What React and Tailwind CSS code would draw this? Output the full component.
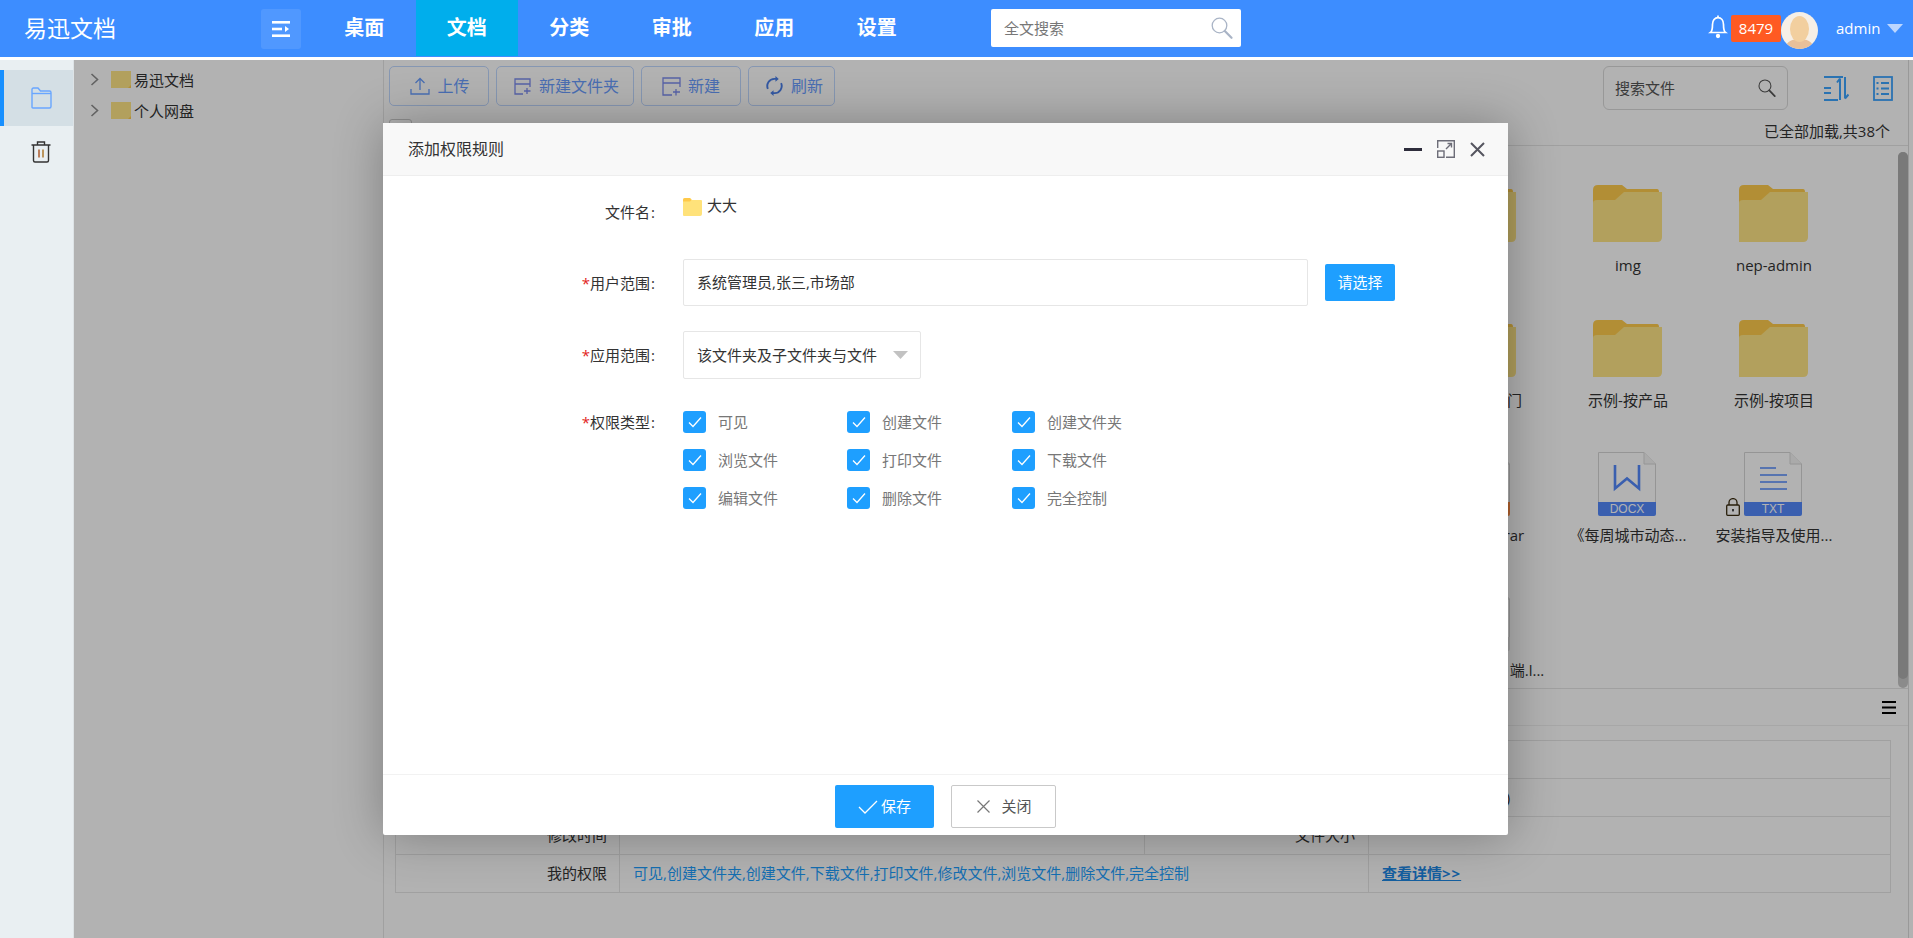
import React from "react";

const NAV = ["桌面", "文档", "分类", "审批", "应用", "设置"];

function Folder() {
  return (
    <svg width="69" height="57" viewBox="0 0 69 57">
      <path d="M0 5Q0 0 5 0H29L34 4H64Q66 4 66 7V20H0Z" fill="#ffcc4c" />
      <path d="M0 18Q0 15 4 15H22L31 7H69V52Q69 57 64 57H0Z" fill="#ffe586" />
    </svg>
  );
}

function FileIcon({ label, band, children, lock }) {
  return (
    <div className="relative flex h-[64px] w-[58px] flex-col">
      <svg width="58" height="50" viewBox="0 0 58 50" className="block">
        <path d="M.5 50V.5H46L57.5 12V50" fill="#fff" stroke="#d6d6d6" />
        <path d="M46 .5V12H57.5" fill="#f4f4f4" stroke="#d6d6d6" />
        {children}
      </svg>
      <div className="flex h-[14px] items-center justify-center rounded-b-[2px] font-['Liberation_Sans',sans-serif] text-[12px] leading-[14px] text-[#fff]" style={{ background: band }}>
        {label}
      </div>
      {lock && (
        <svg width="14" height="18" viewBox="0 0 14 18" className="absolute bottom-0 left-[-18px]">
          <rect x=".7" y="7" width="12.6" height="10.3" rx="1" fill="#fff" stroke="#3a2c10" strokeWidth="1.3" />
          <path d="M3 7V4.6a4 4 0 0 1 8 0V7" fill="none" stroke="#3a2c10" strokeWidth="1.3" />
          <rect x="6.2" y="11" width="1.6" height="2.4" fill="#222" />
        </svg>
      )}
    </div>
  );
}

function Cell({ children, label }) {
  return (
    <div className="flex h-[135px] w-[146px] flex-col items-center pt-[30px]">
      <div className="flex h-[70px] items-end">{children}</div>
      <div className="mt-[7px] h-[24px] whitespace-nowrap text-[15px] leading-[24px] text-[#333]">{label}</div>
    </div>
  );
}

function Search({ color = "#a9b4c6", size = 22 }) {
  return (
    <svg width={size} height={size} viewBox="0 0 22 22" fill="none">
      <circle cx="8.5" cy="8.5" r="7.3" stroke={color} strokeWidth="1.3" />
      <path d="M13.8 14 20.5 20.8" stroke={color} strokeWidth="2.2" strokeLinecap="round" />
    </svg>
  );
}

function ToolBtn({ w, icon, label, extra = "" }) {
  return (
    <div className={`flex h-[40px] items-center justify-center rounded-[5px] border border-[#c0d8ff] text-[16px] text-[#6a9eff] ${w} ${extra}`}>
      {icon}
      <span>{label}</span>
    </div>
  );
}

function Check({ label }) {
  return (
    <div className="flex h-[22px] items-center gap-[12px]">
      <div className="flex h-[22px] w-[23px] items-center justify-center rounded-[3px] bg-[#1e9fff]">
        <svg width="14" height="12" viewBox="0 0 14 12" fill="none">
          <path d="M1 6.5 5 10.5 13 1.5" stroke="#fff" strokeWidth="1.3" />
        </svg>
      </div>
      <span className="text-[15px] leading-[22px] text-[#777]">{label}</span>
    </div>
  );
}

function Label({ children, req }) {
  return (
    <div className="w-[272px] shrink-0 text-right text-[15px] leading-[22px] text-[#333]">
      {req && <span className="text-[#e2231a]">*</span>}
      {children}
      <span className="ml-[1px]">:</span>
    </div>
  );
}

function TreeRow({ label }) {
  return (
    <div className="flex h-[31px] items-center">
      <svg width="9" height="13" viewBox="0 0 9 13" fill="none" className="ml-[16px]">
        <path d="M1.5 1 7.5 6.5 1.5 12" stroke="#8d8d8d" strokeWidth="1.6" />
      </svg>
      <svg width="20" height="17" viewBox="0 0 20 17" className="ml-[12px]">
        <rect width="20" height="17" fill="#ffe586" />
        <path d="M17 17 20 14V17Z" fill="#ffcc4c" />
      </svg>
      <span className="ml-[3px] text-[15px] leading-[20px] text-[#333]">{label}</span>
    </div>
  );
}

const BLUE_ROW = "可见,创建文件夹,创建文件,下载文件,打印文件,修改文件,浏览文件,删除文件,完全控制";

export default function App() {
  return (
    <div className="relative h-[938px] w-[1913px] overflow-hidden bg-white font-['Open_Sans','Noto_Sans_CJK_SC',sans-serif]">
      {/* header */}
      <header className="flex h-[60px] items-start border-b-[3px] border-white bg-[#3d8dff]">
        <div className="flex h-[57px] w-[261px] items-center pl-[24px] text-[23px] text-white">易迅文档</div>
        <div className="mt-[9px] flex h-[40px] w-[40px] items-center justify-center rounded-[3px] bg-white/10">
          <svg width="18" height="16" viewBox="0 0 18 16" fill="#fff">
            <rect width="18" height="2.6" />
            <rect y="6.7" width="10" height="2.6" />
            <rect y="13.4" width="18" height="2.6" />
            <path d="M13 5 17 8 13 11Z" />
          </svg>
        </div>
        <nav className="ml-[12px] flex">
          {NAV.map((n) => (
            <div key={n} className={`flex h-[56px] w-[102.5px] items-center justify-center text-[20px] font-bold text-white ${n === "文档" ? "bg-[#00aeec]" : ""}`}>
              {n}
            </div>
          ))}
        </nav>
        <div className="ml-[63px] mt-[9px] flex h-[38px] w-[250px] items-center justify-between rounded-[2px] bg-white pl-[13px] pr-[8px] text-[15px] text-[#777]">
          <span>全文搜索</span>
          <Search />
        </div>
        <div className="ml-[467px] mt-[15px]">
          <svg width="20" height="24" viewBox="0 0 20 24" fill="none" stroke="#fff" strokeWidth="1.7">
            <path d="M2.5 17.5C4.5 16 4.5 13 4.5 9.5C4.5 5.5 6.8 2.6 10 2.6S15.5 5.5 15.5 9.5C15.5 13 15.5 16 17.5 17.5Z" />
            <path d="M10 .6V2.6" />
            <circle cx="10" cy="21" r="1.3" fill="#fff" />
          </svg>
        </div>
        <div className="ml-[3px] mt-[15px] flex h-[27px] w-[50px] items-center justify-center rounded-[2px] bg-[#ff5a22] text-[15px] text-white">8479</div>
        <svg width="37" height="37" viewBox="0 0 37 37" className="mt-[12px]">
          <defs>
            <clipPath id="av"><circle cx="18.5" cy="18.5" r="18.5" /></clipPath>
          </defs>
          <g clipPath="url(#av)">
            <rect width="37" height="37" fill="#f6efe6" />
            <path d="M4 37C5 29 12 27 18.5 27S32 29 33 37Z" fill="#e8c09a" />
            <ellipse cx="18.5" cy="17" rx="9.5" ry="13" fill="#f2cf9f" />
          </g>
        </svg>
        <div className="ml-[18px] h-[57px] text-[15px] leading-[57px] text-white">admin</div>
        <svg width="16" height="9" viewBox="0 0 16 9" className="ml-[7px] mt-[24px]">
          <path d="M0 0H16L8 9Z" fill="#bcd6ff" />
        </svg>
      </header>

      <div className="flex h-[878px]">
        {/* sidebar */}
        <aside className="w-[74px] shrink-0 border-r border-[#dde3e6] bg-[#e9eff2] pt-[10px]">
          <div className="flex h-[56px] items-center justify-center border-l-4 border-[#1890ff] bg-[#d4dfe5] pl-[5px]">
            <svg width="21" height="22" viewBox="0 0 21 22" fill="none" stroke="#69a6ff" strokeWidth="1.4">
              <path d="M1 20V2.5Q1 1 2.5 1H7L9.5 4H18.5Q20 4 20 5.5V19.5Q20 21 18.5 21H2Q1 21 1 20Z" />
              <path d="M1 6.5H20" />
            </svg>
          </div>
          <div className="flex h-[56px] items-center justify-center pb-[4px] pl-[9px]">
            <svg width="20" height="22" viewBox="0 0 20 22" fill="none" stroke="#333" strokeWidth="1.4">
              <path d="M.5 4H19.5M6.5 4V1H13.5V4" />
              <path d="M2.5 4V19.5Q2.5 21 4 21H16Q17.5 21 17.5 19.5V4" />
              <path d="M8 8.5V16.5" stroke="#a8501f" />
              <path d="M12 8.5V16.5" stroke="#a8701f" />
            </svg>
          </div>
        </aside>

        {/* tree */}
        <section className="w-[310px] shrink-0 border-r border-[#e6e6e6] pt-[4px]">
          <TreeRow label="易迅文档" />
          <TreeRow label="个人网盘" />
        </section>

        {/* main */}
        <main className="flex w-[1525px] flex-col border-r border-[#dcdcdc]">
          <div className="flex h-[46px] items-start justify-between pl-[5px] pr-[15px] pt-[6px]">
            <div className="flex gap-[7px]">
              <ToolBtn w="w-[100px]" extra="gap-[7px] pl-[2px]" label="上传" icon={
                <svg width="20" height="18" viewBox="0 0 20 18" fill="none" stroke="#6a9eff" strokeWidth="1.3">
                  <path d="M10 13V1.5M5.5 6 10 1.5 14.5 6M1 12V17H19V12" />
                </svg>
              } />
              <ToolBtn w="w-[138px]" extra="gap-[8px] pl-[3px]" label="新建文件夹" icon={
                <svg width="17" height="17" viewBox="0 0 17 17" fill="none" stroke="#7e8df0" strokeWidth="1.3">
                  <path d="M9 16H1V1H16V9M1 6H16M13 10V16M10 13H16.5" />
                </svg>
              } />
              <ToolBtn w="w-[100px]" extra="gap-[7px]" label="新建" icon={
                <svg width="19" height="19" viewBox="0 0 19 19" fill="none" stroke="#7e8df0" strokeWidth="1.3">
                  <path d="M10 18H1V1H18V10M1 6H18M14 12V18.5M11 15H18" />
                </svg>
              } />
              <ToolBtn w="w-[87px]" extra="gap-[8px] pl-[6px]" label="刷新" icon={
                <svg width="17" height="22" viewBox="0 0 18 22" fill="none" stroke="#4a7fe8" strokeWidth="2">
                  <path d="M2 14A7.5 7.5 0 0 1 9 3.5H11M16 8A7.5 7.5 0 0 1 9 18.5H7" />
                  <path d="M10 .5 13.5 3.5 10 6.5ZM8 15.5 4.5 18.5 8 21.5Z" fill="#4a7fe8" stroke="none" />
                </svg>
              } />
            </div>
            <div className="flex items-center">
              <div className="flex h-[44px] w-[185px] items-center justify-between rounded-[6px] border border-[#dadada] pl-[11px] pr-[11px] text-[15px] text-[#555]">
                <span>搜索文件</span>
                <Search color="#555" size={18} />
              </div>
              <svg width="25" height="25" viewBox="0 0 25 25" fill="none" stroke="#3da5ff" strokeWidth="2" className="ml-[36px]">
                <path d="M0 1H19M0 12H7M0 17H7M0 24H14" />
                <path d="M16 24V2.5M16 2.5 13 6.5M21 1V22.5M21 22.5 24.5 18.5" />
              </svg>
              <svg width="20" height="25" viewBox="0 0 20 25" fill="none" stroke="#3da5ff" strokeWidth="1.8" className="ml-[24px]">
                <rect x="1" y="1" width="18" height="23" />
                <path d="M8 7H16M8 12.5H16M8 18H16M3.5 7H5.5M3.5 12.5H5.5M3.5 18H5.5" />
              </svg>
            </div>
          </div>

          <div className="flex h-[40px] items-start justify-between border-b border-[#e6e6e6] pl-[5px] pr-[18px] pt-[13px]">
            <div className="h-[23px] w-[23px] rounded-[3px] border border-[#ccc]" />
            <span className="-mt-[1px] text-[15px] leading-[27px] text-[#333]">已全部加载,共38个</span>
          </div>

          {/* file grid */}
          <div className="relative flex h-[542px] justify-end overflow-hidden pr-[61px]">
            <div className="grid grid-cols-[repeat(3,146px)] content-start">
              <Cell label="文档库"><div className="mb-[4px] mr-[2px]"><Folder /></div></Cell>
              <Cell label="img"><div className="mb-[4px] mr-[2px]"><Folder /></div></Cell>
              <Cell label="nep-admin"><div className="mb-[4px] mr-[2px]"><Folder /></div></Cell>
              <Cell label="示例-按部门"><div className="mb-[4px] mr-[2px]"><Folder /></div></Cell>
              <Cell label="示例-按产品"><div className="mb-[4px] mr-[2px]"><Folder /></div></Cell>
              <Cell label="示例-按项目"><div className="mb-[4px] mr-[2px]"><Folder /></div></Cell>
              <Cell label="易迅文档.rar"><div className="mr-[2px]"><FileIcon label="RAR" band="#ff8c42" /></div></Cell>
              <Cell label="《每周城市动态...">
                <div className="mr-[2px]">
                  <FileIcon label="DOCX" band="#5389fb">
                    <path d="M17 13V36.5L29 26.5 41 36.5V13" fill="none" stroke="#5389fb" strokeWidth="2.6" />
                  </FileIcon>
                </div>
              </Cell>
              <Cell label="安装指导及使用...">
                <div className="mr-[2px]">
                  <FileIcon label="TXT" band="#5389fb" lock>
                    <path d="M16 16H32M16 23H43M16 30H43M16 37H43" stroke="#5389fb" strokeWidth="1.6" />
                  </FileIcon>
                </div>
              </Cell>
              <Cell label="易迅文档客户端.l..."><div className="mr-[2px]"><FileIcon label="EXE" band="#e6e6e6" /></div></Cell>
            </div>
            <div className="absolute bottom-0 right-0 top-[6px] w-[10px] rounded-[5px] bg-[#c8c8c8]">
              <div className="h-[527px] rounded-[5px] bg-[#aeaeae]" />
            </div>
          </div>

          {/* detail */}
          <div className="flex-1 border-t border-[#e6e6e6]">
            <div className="flex h-[37px] items-center justify-end border-b border-[#efefef] pr-[12px]">
              <svg width="14" height="13" viewBox="0 0 14 13" fill="#000">
                <rect width="14" height="2" />
                <rect y="5.5" width="14" height="2" />
                <rect y="11" width="14" height="2" />
              </svg>
            </div>
            <table className="ml-[11px] mt-[14px] w-[1496px] table-fixed border-collapse text-[15px] text-[#333]">
              <colgroup>
                <col className="w-[224px]" />
                <col className="w-[525px]" />
                <col className="w-[224px]" />
                <col />
              </colgroup>
              <tbody>
                {[
                  ["文件名称", "大大", "文件路径", "/易迅文档/大大"],
                  ["创建人", "系统管理员", "所有者", "系统用户组(admin)"],
                  ["修改时间", "", "文件大小", ""],
                ].map((r) => (
                  <tr key={r[0]} className="h-[38px]">
                    <td className="border border-[#e6e6e6] pr-[12px] text-right">{r[0]}</td>
                    <td className="border border-[#e6e6e6] pl-[13px]">{r[1]}</td>
                    <td className="border border-[#e6e6e6] pr-[13px] text-right">{r[2]}</td>
                    <td className="border border-[#e6e6e6] pl-[13px]">{r[3]}</td>
                  </tr>
                ))}
                <tr className="h-[38px]">
                  <td className="border border-[#e6e6e6] pr-[12px] text-right">我的权限</td>
                  <td colSpan={2} className="border border-[#e6e6e6] pl-[13px] text-[#1e9fff]">{BLUE_ROW}</td>
                  <td className="border border-[#e6e6e6] pl-[13px] font-bold text-[#1e88e5] underline">
                    查看详情<span className="tracking-[1px]">&gt;&gt;</span>
                  </td>
                </tr>
              </tbody>
            </table>
          </div>
        </main>
      </div>

      {/* overlay */}
      <div className="absolute bottom-0 left-[74px] right-0 top-[60px] bg-black/30" />

      {/* modal */}
      <div className="absolute left-[383px] top-[123px] flex h-[712px] w-[1125px] flex-col rounded-[2px] bg-white shadow-[1px_1px_50px_rgba(0,0,0,0.3)]">
        <div className="flex h-[53px] items-center justify-between border-b border-[#eee] bg-[#f8f8f8] pl-[25px] pr-[23px]">
          <span className="text-[16px] text-[#333]">添加权限规则</span>
          <div className="flex items-center">
            <div className="h-[3px] w-[18px] bg-[#2e2d3c]" />
            <svg width="18" height="18" viewBox="0 0 18 18" fill="none" stroke="#6d6d78" strokeWidth="1.4" className="ml-[15px]">
              <path d="M.7 8V.7H17.3V17.3H9" />
              <rect x=".7" y="11" width="6.3" height="6.3" />
              <path d="M9 9 14.5 3.5M10.5 3.5H14.5V7.5" />
            </svg>
            <svg width="15" height="15" viewBox="0 0 15 15" fill="none" stroke="#55555f" strokeWidth="2" className="ml-[15px]">
              <path d="M1 1 14 14M14 1 1 14" />
            </svg>
          </div>
        </div>

        <div className="flex flex-1 flex-col pt-[14px]">
          <div className="flex h-[44px] gap-[28px] pt-[11px]">
            <Label>文件名</Label>
            <div className="-mt-[3px] flex h-[22px] items-start gap-[5px]">
              <svg width="19" height="18" viewBox="0 0 19 18">
                <path d="M0 2Q0 0 2 0H7L9 2H18Q19 2 19 3V16Q19 18 17 18H1Q0 18 0 17Z" fill="#ffe27a" />
                <path d="M0 2Q0 0 2 0H7L8.5 2 7 3.5H0Z" fill="#ffc94a" />
              </svg>
              <span className="-mt-[4px] text-[15px] leading-[22px] text-[#333]">大大</span>
            </div>
          </div>

          <div className="mt-[25px] flex h-[47px] items-center gap-[28px]">
            <Label req>用户范围</Label>
            <div className="flex h-[47px] w-[625px] items-center rounded-[2px] border border-[#e6e6e6] pl-[13px] text-[15px] text-[#333]">系统管理员,张三,市场部</div>
            <div className="ml-[-11px] flex h-[37px] w-[70px] items-center justify-center rounded-[2px] bg-[#1e9fff] text-[15px] text-white">请选择</div>
          </div>

          <div className="mt-[25px] flex h-[48px] items-center gap-[28px]">
            <Label req>应用范围</Label>
            <div className="flex h-[48px] w-[238px] items-center justify-between rounded-[2px] border border-[#e6e6e6] pl-[13px] pr-[12px] text-[15px] text-[#333]">
              <span>该文件夹及子文件夹与文件</span>
              <svg width="15" height="8" viewBox="0 0 15 8"><path d="M0 0H15L7.5 8Z" fill="#c2c2c2" /></svg>
            </div>
          </div>

          <div className="mt-[32px] flex gap-[28px]">
            <Label req>权限类型</Label>
            <div className="grid grid-cols-[164px_165px_auto] gap-y-[16px]">
              {["可见", "创建文件", "创建文件夹", "浏览文件", "打印文件", "下载文件", "编辑文件", "删除文件", "完全控制"].map((l) => (
                <Check key={l} label={l} />
              ))}
            </div>
          </div>
        </div>

        <div className="flex h-[61px] items-start justify-center gap-[17px] border-t border-[#f2f2f2] pt-[10px]">
          <div className="flex h-[43px] w-[99px] items-center justify-center gap-[3px] rounded-[2px] bg-[#1e9fff] text-[15px] text-white">
            <svg width="20" height="14" viewBox="0 0 20 14" fill="none" stroke="#fff" strokeWidth="1.3"><path d="M1 7 7 13 19 1" /></svg>
            <span>保存</span>
          </div>
          <div className="flex h-[43px] w-[105px] items-center justify-center gap-[11px] rounded-[2px] border border-[#c9c9c9] pl-[2px] text-[15px] text-[#555]">
            <svg width="13" height="13" viewBox="0 0 13 13" fill="none" stroke="#777" strokeWidth="1.2"><path d="M.5 .5 12.5 12.5M12.5 .5 .5 12.5" /></svg>
            <span>关闭</span>
          </div>
        </div>
      </div>
    </div>
  );
}
